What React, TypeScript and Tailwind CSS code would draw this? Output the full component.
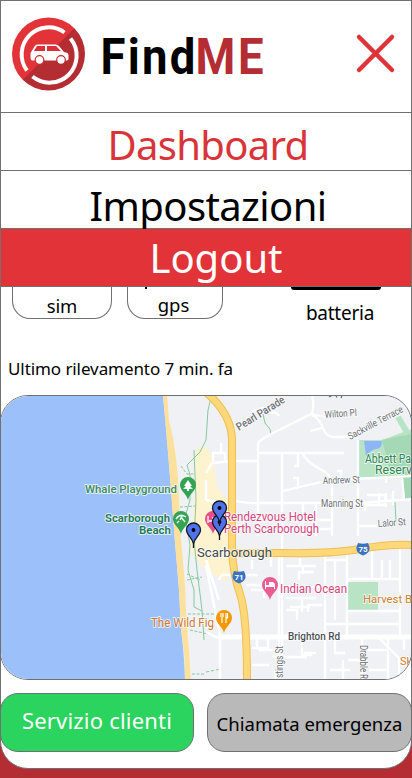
import React from "react";

function Logo() {
  return (
    <svg className="h-[112px] w-[280px]" viewBox="0 0 280 112" fontFamily="Roboto, sans-serif" fontWeight="700" fontSize="50.500">
      <defs>
        <linearGradient id="badge" x1="0" y1="0" x2="1" y2="1">
          <stop offset="0.499" stopColor="#e23338" />
          <stop offset="0.501" stopColor="#b42d33" />
        </linearGradient>
      </defs>
      <circle cx="47.500" cy="53" r="36.500" fill="url(#badge)" />
      <path d="M63.500 31.500A27 27 0 0 0 26 69.500M31.500 75.500A27 27 0 0 0 69.500 37.500" fill="none" stroke="#fff" strokeWidth="4" />
      <path d="M29.500 52l4-6.500q1-2 3-2h18q2 0 3.500 1.500l5 6q4.500 .5 4.500 3v4q0 1.500-2 1.500H31.500q-2 0-2-2z" fill="#fff" />
      <path d="M33 50l3-5h8v5zM46 50v-5h9l5 5z" fill="#d93137" />
      <circle cx="38.500" cy="59" r="4.300" fill="#fff" stroke="#c92e34" strokeWidth="1.200" />
      <circle cx="60" cy="59" r="4.300" fill="#fff" stroke="#b42d33" strokeWidth="1.200" />
      <text transform="translate(99.500 73) scale(.9 1)" letterSpacing="2.500">Find</text>
      <text transform="translate(194.500 73) scale(.9 1)" letterSpacing="3" fill="#b42d33">ME</text>
    </svg>
  );
}

function Pin({ x, y, color, children }: { x: number; y: number; color: string; children?: React.ReactNode }) {
  return (
    <g transform={`translate(${x} ${y})`}>
      <path d="M0 15C-1 9-8 6-8 0A8 8 0 0 1 8 0C8 6 1 9 0 15Z" fill={color} />
      {children}
    </g>
  );
}

function Marker({ x, y }: { x: number; y: number }) {
  return (
    <g transform={`translate(${x} ${y})`}>
      <path d="M0 18V14C-1 8-7 5-7 0A7 7 0 0 1 7 0C7 5 1 8 0 14" fill="#4f72ea" stroke="#15181f" strokeWidth="1.300" />
      <circle r="1.900" fill="#000" />
    </g>
  );
}

function Shield({ x, y, n }: { x: number; y: number; n: string }) {
  return (
    <g transform={`translate(${x} ${y})`}>
      <path d="M-5-6Q0-4.500 5-6L6.500-2Q7.500 4 0 6.500Q-7.500 4-6.500-2Z" fill="#3b73c0" />
      <text y="3" textAnchor="middle" fontSize="8" fontWeight="700" fill="#fff">{n}</text>
    </g>
  );
}

const minorRoads =
  "M312 395Q315 410 311 414L271 434L261 440Q258 441 258 446V503M311 414Q320 419 323 428Q326 437 334 437H358M311 414L325 417M321 416l10-5M310 431l12-3M258 453H344M232 461H258M206 473L212 463L232 461M213 461v-8h12v8M221 453v-10M282 453V680M298 454v12h-4M302 453Q308 463 320 469T332 483V536M283 491L330 480L412 476M232 500Q245 504 258 503H359L412 499M358 440V536M298 486v-8h-5M341 479v-8h-4M386 477v6M402 476l2 23M365 511v-6h20v-10h-18M379 505v-12M386 507v-14M393 505v-14M359 526H380M303 503v33M316 503v33M258 503v33M303 520h29M303 529h29M252 411L271 406M269 413q7-2 10 3M325 555V680M347 551V635M372 548V579H400V548M372 579H347V631M347 611H400V579M400 611V635M382 579V560M390 579V560M325 560H346M335 560V620M325 624H400M300 558v8M258 575H226Q221 573 219 580M265 585H246M252 569v-9M271 552v15M264 598v-8h-13M286 566h30M303 566v8M299 580v-8h15M286 598h30M302 598v14M308 612v-7h14M297 620v-10h-11M304 587h18M290 607h20M257 636v12M268 637v11h-16M279 650h-20M269 665h-17M282 657h25M302 635v20h10M316 653h-12M335 635v18h10M325 655v25M362 637v43M388 636v44M378 637L399 658M404 638v12M366 650h22M348 660h14M330 670h20M343 660v20M399 658v22M369 670h19M275 670v10M272 656h10";

function Street({ x, y, r = 0, w, size = 10, fill = "#6b6f74", weight = 400, children }: { x: number; y: number; r?: number; w?: number; size?: number; fill?: string; weight?: number; children: string }) {
  return (
    <text
      transform={`translate(${x} ${y}) rotate(${r})`}
      textLength={w}
      lengthAdjust="spacingAndGlyphs"
      fontSize={size}
      fontWeight={weight}
      fill={fill}
      stroke="#fff"
      strokeOpacity="0.700"
      strokeWidth="2"
      strokeLinejoin="round"
      paintOrder="stroke"
    >
      {children}
    </text>
  );
}

function CityMap() {
  return (
    <svg className="block h-full w-full" viewBox="1 396 410 283" fontFamily="Roboto, sans-serif">
      <rect x="0" y="395" width="412" height="285" fill="#eff1f4" />
      <path d="M196 450Q206 440 212 458L218 490L231 502V560L226 582L202 566L190 550L194 500Z" fill="#fef3cf" />
      <path d="M0 395H163Q169 460 174 530L179 590L181 630Q184 650 185 680H0Z" fill="#9cc0fa" />
      <path d="M163 395H167L169 420Q178 455 179 500L181 540L185 585Q186 620 189 650L191 680H185Q185 650 181 630L179 590L174 530Q169 460 163 395Z" fill="#fde09c" />
      <path d="M359 440H382L412 429V499L405 498L402 476L359 479Z" fill="#b9e3c5" />
      <path d="M382 440Q398 436 412 434V499H405L402 475L390 470Z" fill="#a5d9b6" />
      <path d="M364 441H382Q382 449 376 449Q371 450 366 456Z" fill="#8eb5f7" />
      <rect x="348" y="582" width="30" height="30" fill="#b9e3c5" />
      <path d="M398 417L408 434" stroke="#b9e3c5" strokeWidth="6" />
      <g fill="none" stroke="#86c99c" strokeWidth="1">
        <path d="M211 398L208 410L206 440L200 452L187 465L190 475V500L185 517L190 545L188 570L194 590V607L202 611" />
        <path d="M194 450L196 500L194 540L197 570L202 610L204 640" />
        <path d="M181 466L187 474H194M180 507L196 506M187 574L200 580M187 580L202 577M188 614H206M190 630L208 634M192 674H205" strokeDasharray="3 1.500" />
        <path d="M263 414l2 9l5 6l1 6M395 502l1 20" />
        <path d="M206 614h10M206 672l15-3" strokeDasharray="3 2" />
      </g>
      <g fill="none" stroke="#fff">
        <path d={minorRoads} strokeWidth="2.300" />
        <path d="M279 555V680" strokeWidth="2.500" />
        <path d="M206 565L213 600L220 635V680M206 500L220 503M206 632L218 638M219 600L206 560M206 480V500" strokeWidth="2.500" />
        <path d="M218 637H412" strokeWidth="5" />
      </g>
      <g fill="none" strokeLinecap="butt">
        <path d="M207 393Q231 414 232 439V550Q233 574 240 594Q247 614 247 681M234 553H280Q331 554 360 549T412 545" stroke="#f0bd58" strokeWidth="8" />
        <path d="M207 393Q231 414 232 439V550Q233 574 240 594Q247 614 247 681M234 553H280Q331 554 360 549T412 545" stroke="#fdd878" strokeWidth="6" />
      </g>
      <path d="M329 397l3-1.500M336 396l1 1.500M342 395.500l-1 2.500" stroke="#6b6f74" strokeWidth="1.200" />
      <Street x={239} y={431} r={-32} w={55} size={11} weight={500}>Pearl Parade</Street>
      <Street x={325} y={418} r={-4} w={32}>Wilton Pl</Street>
      <Street x={350} y={440} r={-28} w={61}>Sackville Terrace</Street>
      <Street x={323} y={484} r={-2} w={37}>Andrew St</Street>
      <Street x={321} y={507} w={42}>Manning St</Street>
      <Street x={378} y={527} r={-4} w={28}>Lalor St</Street>
      <Street x={288} y={640} w={52} size={10.500} fill="#4b4f54" weight={500}>Brighton Rd</Street>
      <Street x={282.500} y={678} r={-90} w={32}>stings St</Street>
      <Street x={359.500} y={645} r={90} w={34}>Drabble R</Street>
      <Street x={365} y={462.500} w={46} size={12} fill="#2c8553" weight={400}>Abbett Pa</Street>
      <Street x={375} y={474} w={37} size={12} fill="#2c8553" weight={400}>Reserv</Street>
      <Street x={85} y={493} w={92} size={11.500} fill="#3b8d5c" weight={500}>Whale Playground</Street>
      <Street x={105} y={522} w={65} size={11.500} fill="#1f7a50" weight={600}>Scarborough</Street>
      <Street x={139} y={533.500} w={32} size={11.500} fill="#1f7a50" weight={600}>Beach</Street>
      <Street x={363} y={603} w={49} size={11.500} fill="#cf8030" weight={400}>Harvest B</Street>
      <Street x={400} y={665} w={12} size={11.500} fill="#cf8030" weight={400}>Sk</Street>
      <Street x={151} y={627} w={63} size={12} fill="#cf7832">The Wild Fig</Street>
      <Street x={280} y={593} w={67} size={12} fill="#d4457f">Indian Ocean</Street>
      <Pin x={188} y={485} color="#34a353">
        <path d="M0-5L4 1H2L5 4H1V6H-1V4H-5L-2 1H-4Z" fill="#fff" />
      </Pin>
      <Pin x={181} y={519} color="#34a353">
        <path d="M-5 0Q-1-6 5-2M-4 4l2-2M0-2l4 5M-1 1l2-4" fill="none" stroke="#e7f6ec" strokeWidth="1.500" />
      </Pin>
      <Pin x={213} y={519} color="#e84e8a">
        <path d="M-5-3v7M-4 2h9v2M-1-1h6v3" fill="none" stroke="#fff" strokeWidth="1.300" />
      </Pin>
      <Street x={224} y={521} w={92} size={12} fill="#d4457f">Rendezvous Hotel</Street>
      <Street x={224} y={532.500} w={95} size={12} fill="#d4457f">Perth Scarborough</Street>
      <Pin x={270} y={585} color="#ec5d92">
        <path d="M-5-4V4H-4V2H4V4H5V-1L3-3H-1V0H-4V-4Z" fill="#fff" />
      </Pin>
      <Pin x={224} y={618} color="#f29900">
        <path d="M-3-5v4M-1-5v4M-2-1v6M2-5v10M3.500-5v5h-2" fill="none" stroke="#fff" strokeWidth="1.200" />
      </Pin>
      <Shield x={363} y={549} n="75" />
      <Shield x={239} y={577} n="71" />
      <Street x={197} y={557} w={75} size={12.500} fill="#44494e">Scarborough</Street>
      <Marker x={193.500} y={530} />
      <Marker x={219.500} y={522} />
      <Marker x={219.500} y={508} />
    </svg>
  );
}

export default function App() {
  return (
    <div className="h-[778px] w-[412px] overflow-hidden bg-[#b42d33] font-['Noto_Sans',sans-serif] text-black">
      <main className="flex h-[769px] flex-col overflow-hidden rounded-b-[28px] border border-[#707070] bg-white">
        <header className="flex h-[112px] shrink-0 items-center justify-between border-b border-[#707070] pr-[14px]">
          <Logo />
          <button aria-label="Chiudi" className="-mt-[5px] flex">
            <svg className="h-[42px] w-[42px]" viewBox="0 0 42 42" stroke="#de3439" strokeWidth="4.500" strokeLinecap="round">
              <path d="M4 4L37 37M37 4L4 37" />
            </svg>
          </button>
        </header>
        <nav className="-mx-px flex shrink-0 flex-col text-center text-[40px] leading-[58px]">
          <a className="h-[58px] border-b border-[#707070] pl-1 pt-[3px] text-[#d93439]"><span className="tracking-[-0.700px]">Dashboard</span></a>
          <a className="h-[58px] border-b border-[#707070] pl-1 pt-[6px]"><span className="tracking-[-0.600px]">Impostazioni</span></a>
          <a className="relative h-[58px] border-b border-[#707070] bg-[#e23338] pl-5 text-white"><span>Logout</span></a>
        </nav>
        <section className="flex h-[72px] shrink-0 items-start text-[19px] leading-[26px]">
          <div className="ml-[11px] flex h-[32px] w-[100px] justify-center rounded-b-[18px] border border-t-0 border-[#707070] pt-[6px] text-[18.500px] tracking-[-0.200px]">sim</div>
          <div className="ml-[15px] flex h-[32px] w-[96px] flex-col items-center rounded-b-[18px] border border-t-0 border-[#707070] pr-[3px]">
            <i className="mr-[56px] h-[2px] w-[2px] bg-black" />
            <span className="pt-[3px] text-[18.500px]">gps</span>
          </div>
          <div className="ml-[66px] flex w-[94px] flex-col items-center">
            <i className="h-[3px] w-[90px] rounded-b-[5px] bg-black" />
            <span className="pl-[8px] pt-[10px] tracking-[-0.250px]">batteria</span>
          </div>
        </section>
        <p className="h-[36px] shrink-0 pl-[7px] text-[17px] leading-[20px] tracking-[-0.080px]">Ultimo rilevamento 7 min. fa</p>
        <div className="-mx-px h-[285px] shrink-0 overflow-hidden rounded-[28px] border border-[#707070]">
          <CityMap />
        </div>
        <div className="-mx-px mt-[13px] flex shrink-0 justify-between">
          <button className="h-[59px] w-[194px] rounded-[18px] border border-[#707070] bg-[#2ad45e] pb-[5px] text-[22px] tracking-[0.200px] text-white">Servizio clienti</button>
          <button className="h-[59px] w-[205px] whitespace-nowrap rounded-[18px] border border-[#707070] bg-[#b9b9b9] pt-[3px] text-[18.500px]">Chiamata emergenza</button>
        </div>
      </main>
    </div>
  );
}
